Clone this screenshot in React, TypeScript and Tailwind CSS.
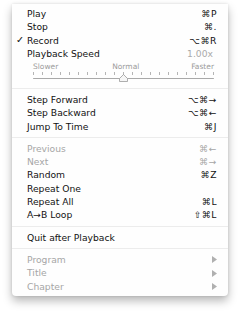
import React from "react";

type Item = {
  label: string;
  sc?: string;
  disabled?: boolean;
  checked?: boolean;
  sub?: boolean;
};

const Row = ({ label, sc, disabled, checked, sub }: Item) => (
  <div
    className={`relative flex h-[13.3px] items-center justify-between pl-[15px] pr-[11px] ${
      disabled ? "text-[#a6a6a6]" : "text-[#121212]"
    }`}
  >
    {checked && (
      <span className="absolute left-[4px] top-0 flex h-full items-center text-[9.5px]">✓</span>
    )}
    <span className="whitespace-nowrap">{label}</span>
    {sc && <span className="whitespace-nowrap tracking-[0.5px]">{sc}</span>}
    {sub && (
      <svg width="5" height="7" viewBox="0 0 5 7">
        <path d="M0 0 L5 3.5 L0 7 Z" fill="#b0b0b0" />
      </svg>
    )}
  </div>
);

const Sep = () => (
  <div className="flex h-[9px] items-center">
    <div className="h-[1.5px] w-full bg-[#ececec]" />
  </div>
);

const Slider = () => {
  const ticks = Array.from({ length: 21 }, (_, i) => i);
  return (
    <div className="flex h-[23.7px] flex-col pl-[21px] pr-[14px] pt-[1px]">
      <div className="flex items-center justify-between text-[7.5px] leading-[9px] text-[#9c9c9c]">
        <span>Slower</span>
        <span className="translate-x-[1px]">Normal</span>
        <span>Faster</span>
      </div>
      <div className="relative mt-[1px] h-[12px]">
        <div className="flex justify-between">
          {ticks.map((t) => (
            <div key={t} className="h-[3px] w-[1px] bg-[#b5b5b5]" />
          ))}
        </div>
        <div className="absolute left-0 right-0 top-[6px] h-[1.5px] rounded bg-[#a9a9a9]" />
        <svg
          width="9"
          height="8"
          viewBox="0 0 9 8"
          className="absolute left-[85.5px] top-[2.5px]"
        >
          <path d="M4.5 0.5 L8.5 4.5 L8.5 7.5 L0.5 7.5 L0.5 4.5 Z" fill="#f6f6f6" stroke="#9a9a9a" strokeWidth="0.8" />
        </svg>
      </div>
    </div>
  );
};

export default function App() {
  return (
    <div className="h-[315px] w-[240px] bg-white pl-[12px] pt-[4px] [font-family:'DejaVu_Sans',sans-serif] text-[9.2px]">
      <div className="h-[292px] w-[216px] rounded-b-[4px] bg-[#fefefe] pt-[3.35px] shadow-[0_5px_10px_rgba(0,0,0,0.28),0_0_3px_rgba(0,0,0,0.12)]">
        <Row label="Play" sc="⌘P" />
        <Row label="Stop" sc="⌘." />
        <Row label="Record" sc="⌥⌘R" checked />
        <div className="flex h-[13.3px] items-center justify-between pl-[15px] pr-[15px] text-[#121212]">
          <span>Playback Speed</span>
          <span className="text-[#aaaaaa]">1.00x</span>
        </div>
        <Slider />
        <Sep />
        <Row label="Step Forward" sc="⌥⌘→" />
        <Row label="Step Backward" sc="⌥⌘←" />
        <Row label="Jump To Time" sc="⌘J" />
        <Sep />
        <Row label="Previous" sc="⌘←" disabled />
        <Row label="Next" sc="⌘→" disabled />
        <Row label="Random" sc="⌘Z" />
        <Row label="Repeat One" />
        <Row label="Repeat All" sc="⌘L" />
        <Row label="A→B Loop" sc="⇧⌘L" />
        <Sep />
        <Row label="Quit after Playback" />
        <Sep />
        <Row label="Program" disabled sub />
        <Row label="Title" disabled sub />
        <Row label="Chapter" disabled sub />
      </div>
    </div>
  );
}
